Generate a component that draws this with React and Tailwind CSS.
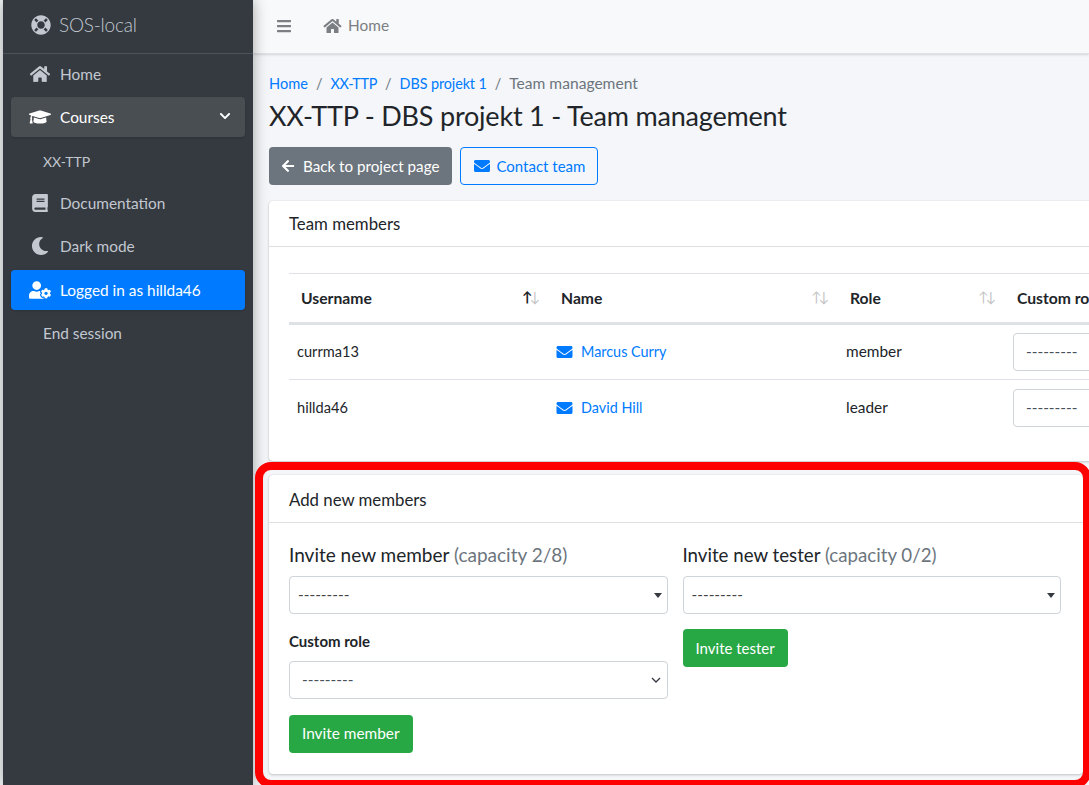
import { FaLifeRing, FaHome, FaGraduationCap, FaChevronDown, FaBook, FaMoon, FaUserCog, FaBars, FaArrowLeft, FaEnvelope } from "react-icons/fa";

function NavItem({ icon: Icon, label, active, open, sub, className = "mb-[3px]" }) {
  let cls = "text-[#c2c7d0]";
  if (open) cls = "bg-[#494e53] text-white";
  if (active) cls = "bg-[#007bff] text-white";
  return (
    <a className={`flex items-center h-10 rounded ${sub ? "pl-8 pr-2" : "pl-[19px] pr-2"} ${cls} ${className} ${active || open ? "shadow-sm" : ""}`}>
      {Icon && <Icon className="w-[22px] h-[18px] mr-[9px] -ml-[1px] shrink-0" />}
      <span className={`pt-[2px] ${sub === "short" ? "text-[14px]" : ""}`}>{label}</span>
      {open && <FaChevronDown className="w-3 h-3 ml-auto mr-[6px] mb-[2px]" />}
    </a>
  );
}

function Sort({ up }) {
  return (
    <span className="ml-auto mb-[6px] text-[14px] font-normal tracking-[-3px] flex">
      <span className={up ? "text-[#212529] font-bold" : "text-[#c4c4c4]"}>↑</span>
      <span className="text-[#c4c4c4]">↓</span>
    </span>
  );
}

function Th({ children, up }) {
  return (
    <th className="px-3 pt-[2px] h-[50px] text-left font-bold text-[15.7px]">
      <div className="flex items-center">
        <span>{children}</span>
        {up !== undefined && <Sort up={up} />}
      </div>
    </th>
  );
}

function Row({ user, name, role }) {
  return (
    <tr className="border-b border-[#dee2e6] last:border-b-0">
      <td className="px-2 h-[56px] text-[14.6px]">{user}</td>
      <td className="px-2">
        <a className="flex items-center text-[#007bff] text-[14.4px]">
          <FaEnvelope className="w-[17px] h-4 mr-2 -ml-[1px]" />
          {name}
        </a>
      </td>
      <td className="px-2">{role}</td>
      <td className="pl-2">
        <div className="w-[200px] h-[38px] border border-[#ced4da] rounded flex items-center px-3 text-[#495057]">---------</div>
      </td>
    </tr>
  );
}

function Select2() {
  return (
    <div className="h-[38px] border border-[#ced4da] rounded bg-white flex items-center pl-2 pr-[5px] text-[#444]">
      <span>---------</span>
      <span className="ml-auto w-0 h-0 border-x-4 border-x-transparent border-t-[5px] border-t-[#343a40]" />
    </div>
  );
}

export default function App() {
  return (
    <div className="relative w-[1089px] h-[785px] overflow-hidden flex bg-[#f4f6f9] text-[#212529] text-[15.4px] font-['Lato','Noto_Sans',sans-serif]">
      <aside className="ml-[3px] w-[250px] shrink-0 bg-[#343a40] shadow-[0_0_14px_rgba(0,0,0,0.35)] z-10">
        <div className="h-[54px] border-b border-[#4b545c] flex items-center pl-[28px] pb-[3px] text-[19px] tracking-[-0.2px] font-light text-[#c2c7d0]">
          <FaLifeRing className="w-5 h-5 mr-2" />
          SOS-local
        </div>
        <nav className="px-2">
          <NavItem icon={FaHome} label="Home" />
          <NavItem icon={FaGraduationCap} label="Courses" open />
          <NavItem label="XX-TTP" sub="short" />
          <NavItem icon={FaBook} label="Documentation" />
          <NavItem icon={FaMoon} label="Dark mode" className="mb-1" />
          <NavItem icon={FaUserCog} label="Logged in as hillda46" active />
          <NavItem label="End session" sub />
        </nav>
      </aside>
      <main className="flex-1 min-w-0">
        <header className="h-[54px] bg-[#f8f9fa] border-b border-[#dee2e6] shadow-sm flex items-center pl-[24px] pb-[2px] text-[#7b7f83]">
          <FaBars className="w-[14px] h-4" />
          <FaHome className="w-[19px] h-4 ml-[32px] mr-[6px]" />
          Home
        </header>
        <div className="pl-4 pt-[18px]">
          <div className="flex items-center h-6 text-[#6c757d] text-[14.4px]">
            <a className="text-[#007bff] text-[14.6px]">Home</a>
            <span className="px-2">/</span>
            <a className="text-[#007bff] tracking-[-0.3px]">XX-TTP</a>
            <span className="px-2">/</span>
            <a className="text-[#007bff] tracking-[-0.1px]">DBS projekt 1</a>
            <span className="px-2">/</span>
            <span className="text-[15.6px]">Team management</span>
          </div>
          <h1 className="text-[27px] tracking-[-0.2px] leading-[34px] mt-[3px]">XX-TTP - DBS projekt 1 - Team management</h1>
          <div className="flex gap-2 mt-[14px] text-[15.2px]">
            <button className="h-[38px] pl-3 pr-[13px] bg-[#6c757d] text-white rounded flex items-center">
              <FaArrowLeft className="w-[14px] h-[14px] mr-2" />
              Back to project page
            </button>
            <button className="h-[38px] px-3 border border-[#007bff] text-[#007bff] rounded flex items-center text-[15px]">
              <FaEnvelope className="w-[18px] h-4 mr-[5px]" />
              Contact team
            </button>
          </div>
          <section className="mt-4 w-[1000px] h-[260px] bg-white rounded shadow-[0_0_1px_rgba(0,0,0,0.13),0_1px_3px_rgba(0,0,0,0.2)]">
            <div className="h-[46px] px-5 flex items-center border-b border-[#dfdfdf] text-[16.8px]">Team members</div>
            <div className="px-5 pt-[26px]">
              <table className="border-collapse w-[960px] table-fixed">
                <colgroup>
                  <col className="w-[260px]" />
                  <col className="w-[289px]" />
                  <col className="w-[167px]" />
                  <col />
                </colgroup>
                <thead>
                  <tr className="border-t border-[#dee2e6] border-b-[3px] border-b-[#dee2e6]">
                    <Th up>Username</Th>
                    <Th up={false}>Name</Th>
                    <Th up={false}>Role</Th>
                    <Th>Custom role</Th>
                  </tr>
                </thead>
                <tbody>
                  <Row user="currma13" name="Marcus Curry" role="member" />
                  <Row user="hillda46" name="David Hill" role="leader" />
                </tbody>
              </table>
            </div>
          </section>
          <section className="mt-[14px] w-[814px] h-[299px] bg-white rounded shadow-[0_0_1px_rgba(0,0,0,0.13),0_1px_3px_rgba(0,0,0,0.2)]">
            <div className="h-[48px] pt-[2px] px-5 flex items-center border-b border-[#dfdfdf] text-[16.8px]">Add new members</div>
            <div className="grid grid-cols-2 gap-[15px] pl-5 pr-[22px] pt-[20px]">
              <div>
                <h4 className="text-[19px] leading-6 mb-[9px]">Invite new member <span className="text-[#6c757d]">(capacity 2/8)</span></h4>
                <Select2 />
                <label className="block font-bold text-[15px] mt-[15px] mb-2 leading-6">Custom role</label>
                <div className="h-[38px] border border-[#ced4da] rounded bg-white flex items-center pl-3 pr-[6px] text-[#495057]">
                  <span>---------</span>
                  <svg className="ml-auto w-[10px] h-[8px]" viewBox="0 0 10 8" fill="none" stroke="#343a40" strokeWidth="1.3"><path d="M1 2l4 4 4-4" /></svg>
                </div>
                <button className="mt-4 h-[38px] px-[13px] bg-[#28a745] text-white rounded">Invite member</button>
              </div>
              <div>
                <h4 className="text-[18.7px] leading-6 mb-[9px]">Invite new tester <span className="text-[#6c757d]">(capacity 0/2)</span></h4>
                <Select2 />
                <button className="mt-[15px] h-[38px] px-[13px] bg-[#28a745] text-white rounded text-[15px]">Invite tester</button>
              </div>
            </div>
          </section>
        </div>
      </main>
      <div className="absolute left-[255px] top-[462px] w-[836px] h-[326px] border-[8px] border-[#ff0000] rounded-[16px] pointer-events-none z-20" />
    </div>
  );
}
